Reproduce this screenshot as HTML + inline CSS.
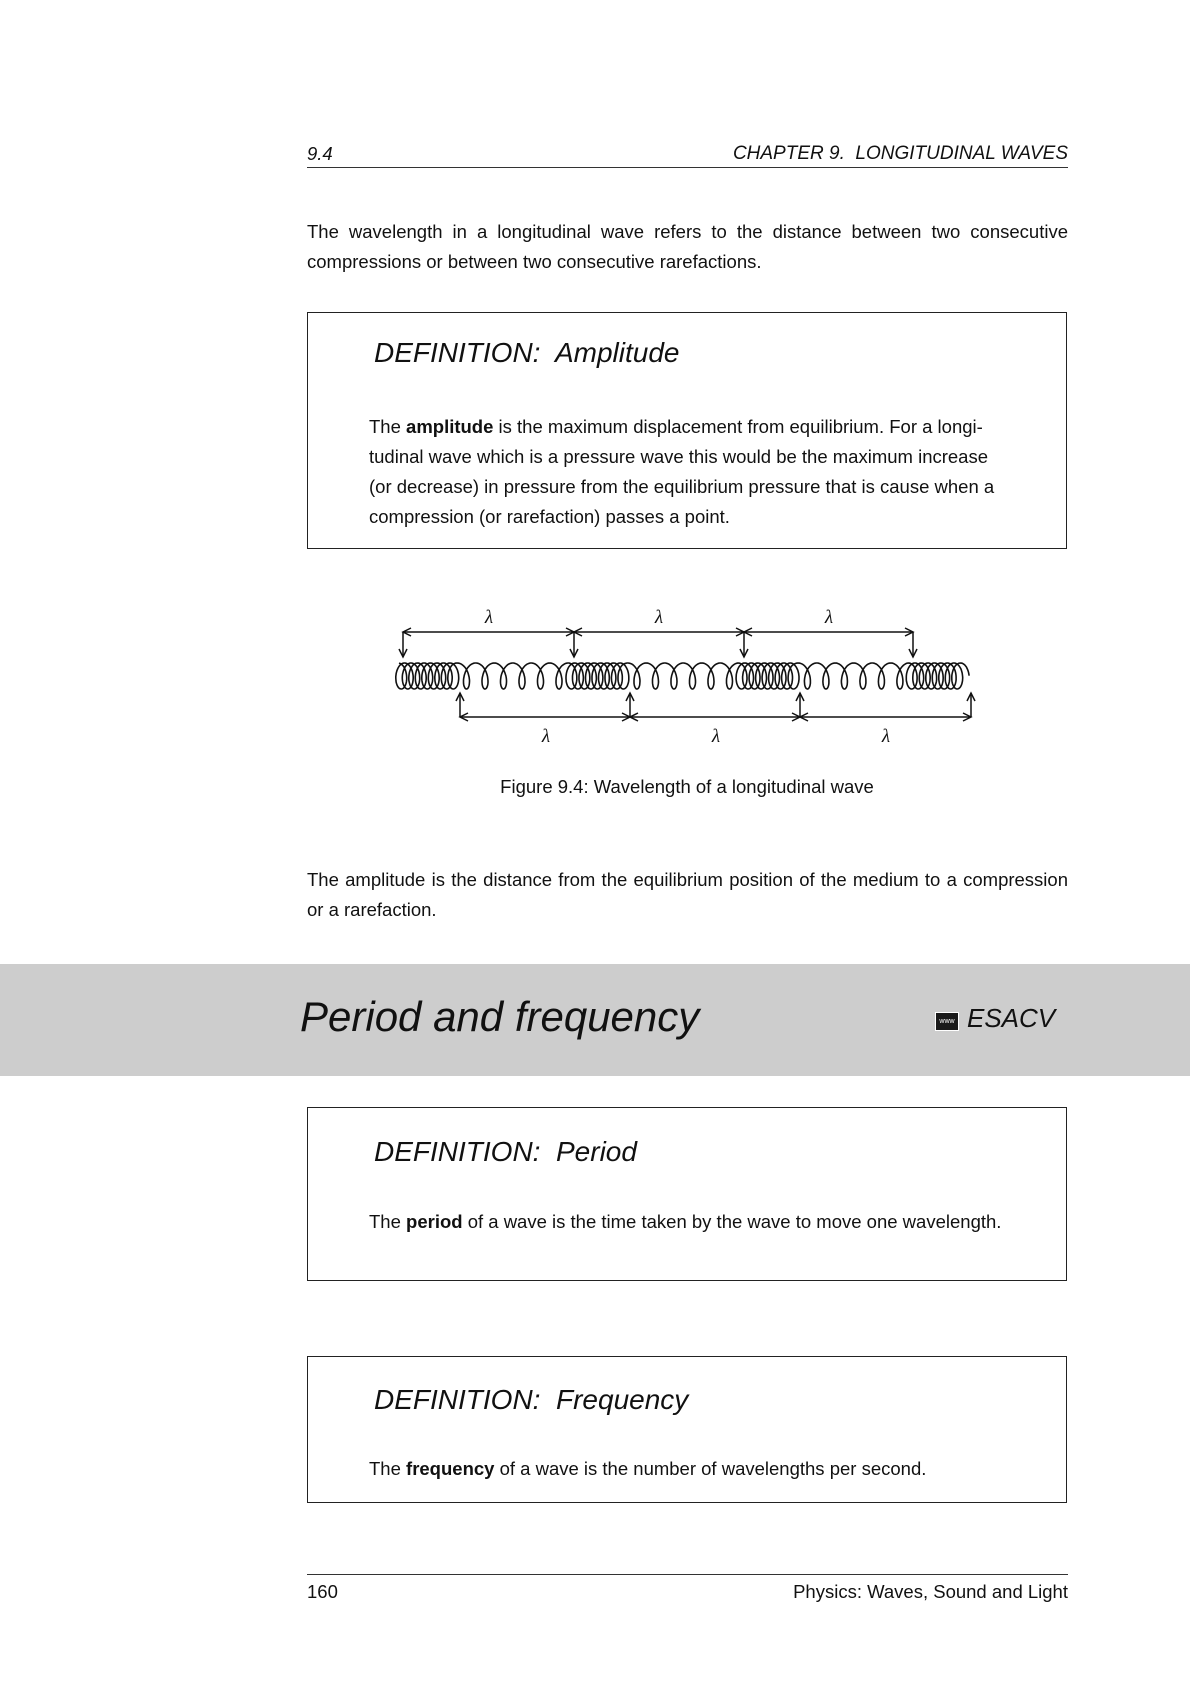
<!DOCTYPE html>
<html><head><meta charset="utf-8"><style>
body{margin:0;background:#fff;}
.pg{position:relative;width:1190px;height:1683px;overflow:hidden;font-family:"Liberation Sans","DejaVu Sans",sans-serif;color:#111;}
.a{position:absolute;white-space:nowrap;}
.p{font-size:18.5px;line-height:30px;}
.box{position:absolute;left:307px;width:758px;border:1.6px solid #222;}
.dt{position:absolute;left:66px;font-style:italic;font-size:28px;font-weight:300;}
.bt{position:absolute;left:61px;font-size:18.5px;line-height:30px;}
</style></head><body><div class="pg">
<div class="a" style="left:307px;top:143px;font-style:italic;font-size:18.5px;">9.4</div>
<div class="a" style="right:122px;top:143px;font-style:italic;font-size:19px;">CHAPTER 9.&nbsp; LONGITUDINAL WAVES</div>
<div class="a" style="left:307px;top:167px;width:761px;border-top:1px solid #333;"></div>
<div class="a p" style="left:307px;top:217px;width:761px;white-space:normal;text-align:justify;text-align-last:left;">The wavelength in a longitudinal wave refers to the distance between two consecutive compressions or between two consecutive rarefactions.</div>
<div class="box" style="top:312px;height:235px;">
<div class="dt" style="top:24px;">DEFINITION:&nbsp; Amplitude</div>
<div class="bt" style="top:99px;width:660px;white-space:normal;">The <b>amplitude</b> is the maximum displacement from equilibrium. For a longi-<br>tudinal wave which is a pressure wave this would be the maximum increase<br>(or decrease) in pressure from the equilibrium pressure that is cause when a<br>compression (or rarefaction) passes a point.</div>
</div>
<svg class="a" style="left:0;top:0" width="1190" height="800" id="fig">
<g fill="none" stroke="#111" stroke-width="1.5" id="ar"></g>
<path id="spring" fill="none" stroke="#111" stroke-width="1.6"/>
<g font-family="Liberation Serif,serif" font-style="italic" font-size="19" text-anchor="middle" fill="#111">
<text x="489" y="623">λ</text><text x="659" y="623">λ</text><text x="829" y="623">λ</text>
<text x="546" y="742">λ</text><text x="716" y="742">λ</text><text x="886" y="742">λ</text>
</g>
</svg>
<div class="a" style="left:0;width:1374px;text-align:center;top:776px;font-size:18.5px;">Figure 9.4: Wavelength of a longitudinal wave</div>
<div class="a p" style="left:307px;top:865px;width:761px;white-space:normal;text-align:justify;">The amplitude is the distance from the equilibrium position of the medium to a compres&shy;sion or a rarefaction.</div>
<div class="a" style="left:0;top:964px;width:1190px;height:112px;background:#cdcdcd;"></div>
<div class="a" style="left:300px;top:993px;font-style:italic;font-size:42px;font-weight:300;">Period and frequency</div>
<div class="a" style="left:935px;top:1012px;width:22px;height:17px;background:#1a1a1a;border:1px solid #fff;color:#fff;font-size:7px;line-height:17px;text-align:center;">www</div>
<div class="a" style="left:967px;top:1003px;font-style:italic;font-size:26px;font-weight:300;">ESACV</div>
<div class="box" style="top:1107px;height:172px;">
<div class="dt" style="top:28px;">DEFINITION:&nbsp; Period</div>
<div class="bt" style="top:99px;">The <b>period</b> of a wave is the time taken by the wave to move one wavelength.</div>
</div>
<div class="box" style="top:1356px;height:145px;">
<div class="dt" style="top:27px;">DEFINITION:&nbsp; Frequency</div>
<div class="bt" style="top:97px;">The <b>frequency</b> of a wave is the number of wavelengths per second.</div>
</div>
<div class="a" style="left:307px;top:1574px;width:761px;border-top:1px solid #333;"></div>
<div class="a" style="left:307px;top:1581px;font-size:18.5px;">160</div>
<div class="a" style="right:122px;top:1581px;font-size:18.5px;">Physics: Waves, Sound and Light</div>
</div>
<script>
(function(){
var ar=document.getElementById('ar'),s='';
function L(x1,y1,x2,y2){s+='<line x1="'+x1+'" y1="'+y1+'" x2="'+x2+'" y2="'+y2+'"/>';}
function head(x,y,dx,dy){var px=-dy,py=dx; s+='<path d="M'+(x-dx*8+px*4)+' '+(y-dy*8+py*4)+' L'+x+' '+y+' L'+(x-dx*8-px*4)+' '+(y-dy*8-py*4)+'"/>';}
var T=[403,574,744,913],B=[460,630,800,971];
for(var i=0;i<3;i++){L(T[i],632,T[i+1],632);head(T[i],632,-1,0);head(T[i+1],632,1,0);}
T.forEach(function(x){L(x,632,x,657);head(x,657,0,1);});
for(var i=0;i<3;i++){L(B[i],717,B[i+1],717);head(B[i],717,-1,0);head(B[i+1],717,1,0);}
B.forEach(function(x){L(x,717,x,693);head(x,693,0,-1);});
ar.innerHTML=s;
var d='',x=398,th=0,cy=676,rx=7,ry=13,first=true;
while(x<962){
 var rel=((x-398)%170+170)%170;
 var pitch=rel<58?6.5:18.5;
 var step=0.12;
 x+=pitch*step/(2*Math.PI);th+=step;
 var px=x+rx*Math.sin(th),py=cy-ry*Math.cos(th);
 d+=(first?'M':'L')+px.toFixed(1)+' '+py.toFixed(1)+' ';first=false;
}
document.getElementById('spring').setAttribute('d',d);
})();
</script>
</body></html>
